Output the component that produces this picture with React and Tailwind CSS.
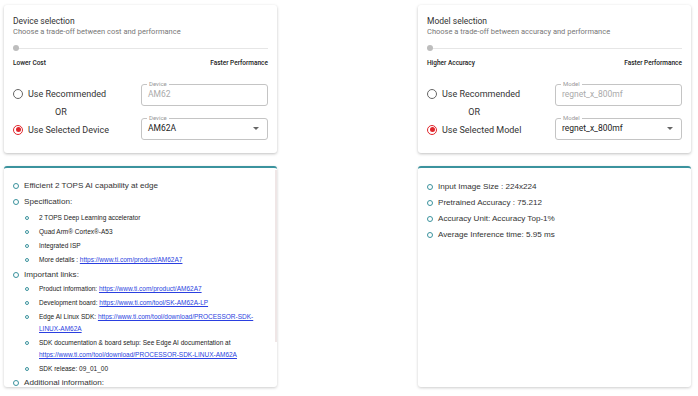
import React from 'react';

const roboto = { fontFamily: 'Roboto, "Liberation Sans", sans-serif' };
const arial = { fontFamily: '"Liberation Sans", Arial, sans-serif' };

const Radio = ({ checked, label }) => (
  <div className="flex items-center gap-[5px]">
    <span
      className={`flex h-[10px] w-[10px] items-center justify-center rounded-full border ${
        checked ? 'border-[#e0262c]' : 'border-[#666]'
      }`}
    >
      {checked && <span className="h-[5px] w-[5px] rounded-full bg-[#e0262c]" />}
    </span>
    <span className="text-[9px] leading-[12px] text-[#333]">{label}</span>
  </div>
);

const Field = ({ label, value, disabled, select }) => (
  <div className="relative h-[22px] w-[127px] rounded-[3px] border border-[#c4c4c4]">
    <span className="absolute -top-[5px] left-[5px] bg-white px-[2px] text-[6px] leading-[8px] text-[#999]">
      {label}
    </span>
    <div
      className={`flex h-full items-center pl-[6px] pr-[8px] text-[8.5px] ${
        disabled ? 'text-[#aaa]' : 'text-[#222]'
      }`}
    >
      <span className="flex-1">{value}</span>
      {select && (
        <svg width="6" height="3" viewBox="0 0 6 3">
          <path d="M0 0h6L3 3z" fill="#666" />
        </svg>
      )}
    </div>
  </div>
);

const SelectionCard = ({ title, subtitle, left, right, recommended, selectLabel, fieldLabel, recValue, selValue }) => (
  <div className="h-[148px] w-[273px] rounded-[3px] bg-white px-[9px] pt-[10px] shadow-[0_1px_3px_rgba(0,0,0,0.25)]" style={roboto}>
    <div className="text-[8.5px] leading-[12px] text-[#333]">{title}</div>
    <div className="text-[7.5px] leading-[10px] text-[#777]">{subtitle}</div>
    <div className="relative mt-[7px] h-[8px]">
      <div className="absolute left-0 right-0 top-[4px] h-px bg-[#e6e6e6]" />
      <div className="absolute left-0 top-[1px] h-[6px] w-[6px] rounded-full bg-[#bdbdbd]" />
    </div>
    <div className="mt-[7px] flex justify-between text-[6.5px] font-medium text-[#222]">
      <span>{left}</span>
      <span>{right}</span>
    </div>
    <div className="mt-[11px] flex justify-between">
      <div className="flex flex-col pt-[8px]">
        <Radio label={recommended} />
        <div className="my-[6px] text-center text-[9px] leading-[12px] text-[#333]">OR</div>
        <Radio checked label={selectLabel} />
      </div>
      <div className="flex flex-col gap-[12px] pt-[4px]">
        <Field label={fieldLabel} value={recValue} disabled />
        <Field label={fieldLabel} value={selValue} select />
      </div>
    </div>
  </div>
);

const Bullet = ({ small }) => (
  <span
    className={`shrink-0 rounded-full border border-[#3b939e] ${
      small ? 'mt-[4px] h-[4px] w-[4px]' : 'mt-[2.5px] h-[6px] w-[6px]'
    }`}
  />
);

const Item = ({ children }) => (
  <li className="flex gap-[5px] text-[8.1px] leading-[11px] text-[#333]">
    <Bullet />
    <div className="flex-1">{children}</div>
  </li>
);

const SubItem = ({ children }) => (
  <li className="flex gap-[10px] pl-[12px] text-[6.5px] leading-[12px] text-[#222]">
    <Bullet small />
    <div className="flex-1">{children}</div>
  </li>
);

const A = ({ children }) => <span className="text-[#2a3fe0] underline">{children}</span>;

export default function App() {
  return (
    <div className="h-[396px] w-[698px] bg-white pl-[4px] pr-[7px] pt-[5px]">
      <div className="flex justify-between">
        <SelectionCard
          title="Device selection"
          subtitle="Choose a trade-off between cost and performance"
          left="Lower Cost"
          right="Faster Performance"
          recommended="Use Recommended"
          selectLabel="Use Selected Device"
          fieldLabel="Device"
          recValue="AM62"
          selValue="AM62A"
        />
        <SelectionCard
          title="Model selection"
          subtitle="Choose a trade-off between accuracy and performance"
          left="Higher Accuracy"
          right="Faster Performance"
          recommended="Use Recommended"
          selectLabel="Use Selected Model"
          fieldLabel="Model"
          recValue="regnet_x_800mf"
          selValue="regnet_x_800mf"
        />
      </div>
      <div className="mt-[13px] flex justify-between" style={arial}>
        <div className="relative h-[221px] w-[273px] overflow-hidden rounded-[3px] border-t-2 border-[#3b939e] bg-white shadow-[0_1px_3px_rgba(0,0,0,0.2)]">
          <div className="absolute right-0 top-[2px] h-[172px] w-[2px] bg-[#efe6e6]" />
          <ul className="flex flex-col pl-[9px] pr-[14px] pt-[12px]">
            <Item>Efficient 2 TOPS AI capability at edge</Item>
            <li className="mt-[5px]" />
            <Item>Specification:</Item>
            <ul className="mt-[5px] flex flex-col gap-[2px]">
              <SubItem>2 TOPS Deep Learning accelerator</SubItem>
              <SubItem>Quad Arm® Cortex®-A53</SubItem>
              <SubItem>Integrated ISP</SubItem>
              <SubItem>
                More details : <A>https://www.ti.com/product/AM62A7</A>
              </SubItem>
            </ul>
            <li className="mt-[3px]" />
            <Item>Important links:</Item>
            <ul className="mt-[3px] flex flex-col gap-[2px]">
              <SubItem>
                Product information: <A>https://www.ti.com/product/AM62A7</A>
              </SubItem>
              <SubItem>
                Development board: <A>https://www.ti.com/tool/SK-AM62A-LP</A>
              </SubItem>
              <SubItem>
                Edge AI Linux SDK: <A>https://www.ti.com/tool/download/PROCESSOR-SDK-LINUX-AM62A</A>
              </SubItem>
              <SubItem>
                SDK documentation &amp; board setup: See Edge AI documentation at{' '}
                <A>https://www.ti.com/tool/download/PROCESSOR-SDK-LINUX-AM62A</A>
              </SubItem>
              <SubItem>SDK release: 09_01_00</SubItem>
            </ul>
            <li className="mt-[2px]" />
            <Item>Additional information:</Item>
          </ul>
        </div>
        <div className="h-[221px] w-[273px] rounded-[3px] border-t-2 border-[#3b939e] bg-white shadow-[0_1px_3px_rgba(0,0,0,0.2)]">
          <ul className="flex flex-col gap-[5px] pl-[9px] pt-[13px]">
            <Item>Input Image Size : 224x224</Item>
            <Item>Pretrained Accuracy : 75.212</Item>
            <Item>Accuracy Unit: Accuracy Top-1%</Item>
            <Item>Average Inference time: 5.95 ms</Item>
          </ul>
        </div>
      </div>
    </div>
  );
}
